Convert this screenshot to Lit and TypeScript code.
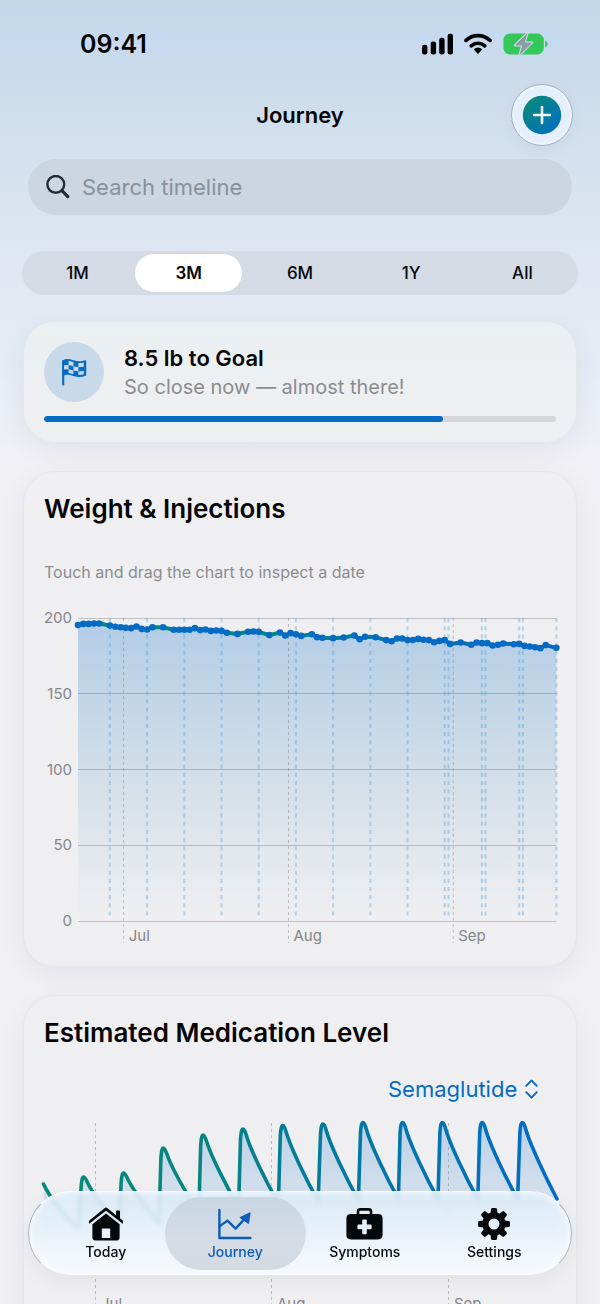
import { LitElement, html, svg, css } from "lit";
import { customElement, state } from "lit/decorators.js";

/* ---------- Weight chart data: [day, pounds] ---------- */
const WEIGHTS: [number, number][] = [
  [0, 195.3], [1, 196.1], [2, 196.1], [3, 196.4], [4, 196.4], [6, 195], [7, 194.2], [8, 193.9], [9, 193.5],
  [10, 193.3], [11, 194.4], [12, 192.8], [13, 192.4], [14, 193.9], [16, 193.9], [18, 192.2], [19, 192.2],
  [20, 192.2], [21, 192.2], [22, 193.3], [23, 192], [24, 192.4], [25, 191.5], [26, 191.7], [27, 191.5],
  [28, 190.2], [30, 189.5], [32, 190.9], [33, 191.1], [34, 190.9], [36, 188.7], [38, 190.4], [39, 188.4],
  [40, 190], [41, 189.3], [42, 188.2], [44, 189.3], [45, 187.3], [46, 186.9], [48, 186.7], [50, 187.1],
  [52, 188.4], [53, 186], [54, 187.6], [56, 187.3], [58, 185.4], [59, 184.7], [60, 186.5], [61, 186.5],
  [62, 185.4], [63, 185.4], [64, 186.2], [65, 185.6], [66, 185.4], [67, 184], [68, 184.9], [69, 185.4],
  [70, 182.9], [72, 183.8], [74, 182.3], [75, 183.8], [76, 183.4], [77, 183.4], [78, 181.8], [79, 182.3],
  [80, 183.2], [82, 182.7], [83, 182.9], [84, 181.6], [85, 181.2], [86, 180.7], [87, 180.1], [88, 182.1],
  [90, 180.3],
];
const INJECTIONS = [6, 13, 20, 27, 34, 41, 48, 55, 62, 69, 69.7, 76, 76.7, 83, 83.7, 90];
const WEIGHT_MONTHS: [string, number][] = [["Jul", 8.6], ["Aug", 39.6], ["Sep", 70.6]];

const dayX = (d: number) => 34 + d * 5.315;
const lbY = (w: number) => 313 - (w * 303) / 200;

/* ---------- Medication chart data: dose peaks and the low after each ---------- */
const PEAKS: [number, number, number][] = [
  [39.6, 62, 112], [79.6, 58, 108], [119.4, 33, 98], [159.2, 20, 92], [199, 14, 88], [238.8, 10.5, 86],
  [279, 9, 85], [319, 7.5, 84], [358.6, 7.5, 84], [398.4, 7.5, 84], [438.2, 7.5, 84], [478.4, 7.5, 84],
];
const LEVEL_MONTHS: [string, number][] = [["Jul", 51], ["Aug", 227], ["Sep", 404]];

const levelPath = () => {
  let d = "M-0.5 69C5 81 20 101 34.8 114";
  PEAKS.forEach(([x, y, low], i) => {
    const a = low - y;
    const end = i === PEAKS.length - 1 ? 34.6 : 35.4;
    d += `L${x - 2.5} ${y + 10}C${x - 2} ${y + 4} ${x - 1.4} ${y} ${x} ${y}`;
    d += `C${x + 1.8} ${y} ${x + 3} ${y + a * 0.08} ${x + 5} ${y + a * 0.155}`;
    d += `C${x + 9} ${y + a * 0.31} ${x + 22} ${y + a * 0.69} ${x + end} ${low}`;
  });
  return d;
};

/* ---------- Icons ---------- */
const gear = svg`
  <g fill="#06090c">
    ${[0, 45, 90, 135, 180, 225, 270, 315].map(
      (a) => svg`<path d="M13.4 7L14 2.2Q14.2 1 15.4 1H18.6Q19.8 1 20 2.2L20.6 7Z" transform="rotate(${a} 17 17)"/>`
    )}
  </g>
  <circle cx="17" cy="17" r="8.6" fill="none" stroke="#06090c" stroke-width="6.2"/>`;

const house = svg`
  <path d="M-1.2 16.2L17 1.8L35.2 16.2" transform="translate(1.2 .2) scale(.93)" fill="none" stroke="#06090c" stroke-width="2.8" stroke-linecap="round" stroke-linejoin="round"/>
  <path d="M27 4.4Q27 3.6 27.8 3.6H30.2Q31 3.6 31 4.4V12.2L27 9Z" fill="#06090c"/>
  <path fill-rule="evenodd" d="M17 6.4L30.6 17.2V30.6Q30.6 33.4 27.8 33.4H6.2Q3.4 33.4 3.4 30.6V17.2ZM13.4 21.4Q12.8 21.4 12.8 22V31H21.2V22Q21.2 21.4 20.6 21.4Z" fill="#06090c"/>`;

const trend = svg`
  <g fill="none" stroke="#0c5db5" stroke-width="2.4" stroke-linecap="round" stroke-linejoin="round">
    <path d="M1.4 3V31H32.4"/>
    <path d="M1.6 19.4L9.4 13.6L17.6 21.6L27 11.4"/>
  </g>
  <path d="M32.6 6.2L31 16.4Q30.8 17.2 30.1 16.7L21.9 11Q21.2 10.4 22.1 10.1L31.6 5.4Q32.6 5.2 32.6 6.2Z" fill="#0c5db5"/>`;

const kit = svg`
  <path d="M12 8V4.6Q12 2.4 14.2 2.4H22.8Q25 2.4 25 4.6V8" fill="none" stroke="#06090c" stroke-width="2.6"/>
  <path fill-rule="evenodd" d="M5 7H32Q36.6 7 36.6 11.4V28Q36.6 32.4 32 32.4H5Q.4 32.4 .4 28V11.4Q.4 7 5 7ZM16.2 13.4V17.4H12.4Q11.4 17.4 11.4 18.4V21.2Q11.4 22.2 12.4 22.2H16.2V26.2Q16.2 27.2 17.2 27.2H19.8Q20.8 27.2 20.8 26.2V22.2H24.6Q25.6 22.2 25.6 21.2V18.4Q25.6 17.4 24.6 17.4H20.8V13.4Q20.8 12.4 19.8 12.4H17.2Q16.2 12.4 16.2 13.4Z" fill="#06090c"/>`;

const TABS = [
  { label: "Today", icon: house, box: "0 0 34 34" },
  { label: "Journey", icon: trend, box: "0 0 34 34" },
  { label: "Symptoms", icon: kit, box: "0 0 37 34" },
  { label: "Settings", icon: gear, box: "0 0 34 34" },
];

/* ---------- Weight & injections chart ---------- */
@customElement("weight-chart")
export class WeightChart extends LitElement {
  static styles = css`
    :host { display: block; }
    .plot { display: block; width: 100%; height: auto; overflow: visible; }
    .label { font: 400 15px Inter, sans-serif; fill: #85858a; }
    .end { text-anchor: end; }
    .grid { stroke: #3c3c43; stroke-opacity: 0.26; stroke-width: 1; }
    .month { stroke: #3c3c43; stroke-opacity: 0.28; stroke-width: 1; stroke-dasharray: 3 3; }
    .shot { stroke: #4ba0dc; stroke-opacity: 0.38; stroke-width: 2; stroke-dasharray: 4.1 4.05; }
    .line { fill: none; stroke: url(#trend); stroke-width: 4; stroke-linejoin: round; }
    .dot { fill: #046bc4; }
  `;
  render() {
    const line = WEIGHTS.map(([d, w]) => `${dayX(d)} ${lbY(w)}`).join("L");
    return html`<svg class="plot" viewBox="0 0 512 338" role="img" aria-label="Weight and injections">
      <defs>
        <linearGradient id="trend" x1="0" x2="1" y1="0" y2="0">
          <stop offset="0" stop-color="#00897b" /><stop offset=".4" stop-color="#00897f" />
          <stop offset="1" stop-color="#0466c8" />
        </linearGradient>
        <linearGradient id="area" x1="0" x2="0" y1="0" y2="1">
          <stop offset="0" stop-color="#0068c9" stop-opacity=".25" />
          <stop offset=".3" stop-color="#1271bd" stop-opacity=".19" />
          <stop offset="1" stop-color="#2a78a8" stop-opacity="0" />
        </linearGradient>
      </defs>
      <path d="M34 313L${line}V313Z" fill="url(#area)" />
      ${[200, 150, 100, 50, 0].map(
        (v) => svg`<line class="grid" x1="34" x2="512.5" y1=${Math.floor(lbY(v)) + 0.5} y2=${Math.floor(lbY(v)) + 0.5}></line>
          <text class="label end" x="28" y=${lbY(v) + 5}>${v}</text>`
      )}
      ${WEIGHT_MONTHS.map(
        ([m, d]) => svg`<line class="month" x1=${dayX(d)} x2=${dayX(d)} y1="10" y2="335"></line>
          <text class="label" x=${dayX(d) + 5} y="333">${m}</text>`
      )}
      ${INJECTIONS.map((d) => svg`<line class="shot" x1=${dayX(d)} x2=${dayX(d)} y1="10" y2="311"></line>`)}
      <path class="line" d="M${line}" />
      ${WEIGHTS.map(([d, w]) => svg`<circle class="dot" cx=${dayX(d)} cy=${lbY(w)} r="3.3"></circle>`)}
    </svg>`;
  }
}

/* ---------- Medication level chart ---------- */
@customElement("level-chart")
export class LevelChart extends LitElement {
  static styles = css`
    :host { display: block; }
    .plot { display: block; width: 100%; height: auto; overflow: visible; }
    .label { font: 400 15px Inter, sans-serif; fill: #85858a; }
    .month { stroke: #3c3c43; stroke-opacity: 0.28; stroke-width: 1; stroke-dasharray: 3 3; }
    .line { fill: none; stroke: url(#level); stroke-width: 3.6; stroke-linecap: round; stroke-linejoin: round; }
  `;
  render() {
    const d = levelPath();
    return html`<svg class="plot" viewBox="0 0 512 210" role="img" aria-label="Estimated medication level">
      <defs>
        <linearGradient id="level" gradientUnits="userSpaceOnUse" x1="0" x2="512" y1="0" y2="0">
          <stop offset="0" stop-color="#048a79" /><stop offset=".3" stop-color="#07857f" />
          <stop offset=".6" stop-color="#0278a4" /><stop offset="1" stop-color="#036bc8" />
        </linearGradient>
        <linearGradient id="fill" gradientUnits="userSpaceOnUse" x1="0" x2="0" y1="8" y2="155">
          <stop offset="0" stop-color="#0068c9" stop-opacity=".22" />
          <stop offset="1" stop-color="#0068c9" stop-opacity="0" />
        </linearGradient>
      </defs>
      ${LEVEL_MONTHS.map(
        ([m, x]) => svg`<line class="month" x1=${x + 0.5} x2=${x + 0.5} y1="8" y2="205"></line>
          <text class="label" x=${x + 6} y="194">${m}</text>`
      )}
      <path d="${d}V155H0Z" fill="url(#fill)" />
      <path class="line" d=${d} />
    </svg>`;
  }
}

/* ---------- Screen ---------- */
@customElement("app-root")
export class AppRoot extends LitElement {
  @state() range = "3M";
  @state() tab = "Journey";

  static styles = css`
    :host {
      display: block;
      position: relative;
      height: 100vh;
      overflow: hidden;
      font-family: Inter, "Liberation Sans", sans-serif;
      color: #050505;
      background: #f0f0f5;
    }
    * { box-sizing: border-box; }
    h1, h2, p { margin: 0; }
    .scroll { height: 100%; overflow-y: auto; scrollbar-width: none; }
    .page {
      display: flex;
      flex-direction: column;
      padding-bottom: 120px;
      background: linear-gradient(180deg, #c5d8e8 0, #c5d9ef 34px, #cbdbeb 70px, #d3e1ee 150px, #dbe4f0 220px, #e4eaf4 310px, #e6ecf6 370px, #f0f0f6 450px, #f0f0f5 500px);
    }
    .status {
      display: flex;
      align-items: center;
      justify-content: space-between;
      height: 84px;
      padding: 4px 52px 0 80px;
    }
    .time { font-size: 25px; line-height: 30px; font-weight: 600; }
    .signals { display: flex; align-items: center; gap: 10px; }
    .header {
      display: grid;
      grid-template-columns: 62px 1fr 62px;
      align-items: center;
      padding: 0 27px;
      text-align: center;
    }
    .title { grid-column: 2; font-size: 22px; line-height: 28px; font-weight: 600; }
    .add {
      display: grid;
      place-items: center;
      width: 62px;
      height: 62px;
      padding: 0;
      border: 1px solid #a3b1c2;
      border-radius: 50%;
      background: #e4effb;
      box-shadow: inset 0 0 3px 1px #f4faff, 0 4px 14px rgba(40, 80, 120, 0.05);
    }
    .search {
      display: flex;
      align-items: center;
      gap: 12px;
      height: 56px;
      margin: 13px 28px 0;
      padding: 0 18px;
      border-radius: 28px;
      background: #cbd6e1;
    }
    .query {
      flex: 1;
      min-width: 0;
      padding: 0;
      border: 0;
      outline: 0;
      background: none;
      color: #1f2a35;
      font: 400 22px/30px Inter, sans-serif;
    }
    .query::placeholder { color: #87919c; opacity: 1; }
    .ranges {
      display: grid;
      grid-template-columns: repeat(5, 1fr);
      margin: 36px 22px 0;
      padding: 3px 0;
      border: 0;
      border-radius: 22px;
      background: #d4dbe5;
      min-width: 0;
    }
    .range { display: grid; padding: 0 2px; cursor: pointer; }
    .radio { position: absolute; opacity: 0; width: 1px; height: 1px; margin: 0; }
    .pill {
      border-radius: 19px;
      font-size: 17px;
      line-height: 38px;
      font-weight: 500;
      text-align: center;
    }
    .radio:checked + .pill { background: #fff; font-weight: 600; }
    .cards { display: flex; flex-direction: column; gap: 28px; padding: 26px 23px 0; }
    .card {
      padding: 20px;
      border: 1px solid rgba(60, 60, 70, 0.045);
      border-radius: 32px;
      background: #efeff1;
      box-shadow: 0 8px 28px rgba(20, 20, 40, 0.06);
    }
    .goal { background: linear-gradient(180deg, #eceff3, #eeeff0); }
    .goal-row { display: flex; align-items: center; gap: 20px; margin-bottom: 14px; }
    .badge {
      display: grid;
      place-items: center;
      width: 60px;
      height: 60px;
      border-radius: 50%;
      background: #c8daea;
    }
    .goal-title { padding-top: 2px; font-size: 22px; line-height: 28px; font-weight: 600; }
    .goal-note { font-size: 20px; line-height: 30px; color: #8b8c90; }
    .bar {
      display: block;
      width: 100%;
      height: 6px;
      appearance: none;
      border: 0;
      border-radius: 3px;
      overflow: hidden;
    }
    .bar::-webkit-progress-bar { background: #d5d7da; }
    .bar::-webkit-progress-value { background: #056ac3; border-radius: 3px; }
    .heading { font-size: 26px; line-height: 34px; font-weight: 600; }
    .hint { margin: 36px 0 26px; font-size: 16px; line-height: 20px; color: #8b8c90; }
    .picker {
      display: flex;
      align-items: center;
      justify-content: flex-end;
      gap: 7px;
      margin: 25px 0 12px;
      padding-right: 18px;
    }
    .drug {
      appearance: none;
      padding: 0;
      border: 0;
      outline: 0;
      background: none;
      color: #056ac3;
      font: 400 22px/28px Inter, sans-serif;
    }
    .tabs {
      position: absolute;
      left: 28px;
      right: 28px;
      bottom: 28px;
      display: grid;
      grid-template-columns: repeat(4, 1fr);
      padding: 5px 12px;
      border: 1px solid rgba(130, 140, 150, 0.6);
      border-top-color: rgba(250, 253, 255, 0.9);
      border-bottom-color: rgba(225, 229, 234, 0.9);
      border-radius: 43px;
      background: linear-gradient(180deg, rgba(219, 234, 246, 0.9) 0, rgba(229, 240, 250, 0.91) 40%, rgba(242, 246, 251, 0.96) 75%, rgba(245, 248, 250, 0.97) 100%);
      backdrop-filter: blur(2px);
      box-shadow: inset 0 0 6px 1px rgba(255, 255, 255, 0.7), 0 6px 20px rgba(0, 0, 0, 0.05);
    }
    .tab {
      display: flex;
      flex-direction: column;
      align-items: center;
      gap: 2px;
      height: 73px;
      margin: 0 -6px;
      padding: 10px 0 0;
      border: 0;
      border-radius: 37px;
      background: none;
      color: #06090c;
      font: 500 14px/18px Inter, sans-serif;
    }
    .active { background: linear-gradient(180deg, #c8d7e3, #d5dce5 60%, #d5dae1); color: #0c5db5; }
  `;

  render() {
    return html`
      <div class="scroll">
        <div class="page">
          <div class="status">
            <span class="time">09:41</span>
            <span class="signals">
              <svg width="32" height="22" viewBox="0 0 32 22" aria-hidden="true">
                <rect x="0" y="11.8" width="5.4" height="9.6" rx="2.2" />
                <rect x="8.7" y="8.6" width="5.4" height="12.8" rx="2.2" />
                <rect x="17.2" y="4.8" width="5.4" height="16.6" rx="2.2" />
                <rect x="25.6" y=".8" width="5.4" height="20.6" rx="2.2" />
              </svg>
              <svg width="28" height="22" viewBox="0 0 28 22" aria-hidden="true">
                <g fill="none" stroke="#000" stroke-width="3.6" stroke-linecap="round">
                  <path d="M2 7.4A17.4 17.4 0 0 1 26 7.4" />
                  <path d="M7.2 12.8A10.4 10.4 0 0 1 20.8 12.8" />
                </g>
                <path d="M14 14.4Q16.4 14.4 17.8 16Q18.2 16.6 17.7 17.1L14.6 20.4Q14 21 13.4 20.4L10.3 17.1Q9.8 16.6 10.2 16Q11.6 14.4 14 14.4Z" />
              </svg>
              <svg width="46" height="24" viewBox="0 0 46 24" aria-hidden="true">
                <rect x="1.4" y="1.6" width="40.4" height="20.8" rx="6.4" fill="#34c759" />
                <path d="M43.2 8.4Q45.8 9.6 45.8 12T43.2 15.6Z" fill="#34c759" />
                <path d="M25.6 .8L12.8 13.4H20.2L17.2 23.4L30.4 10.4H22.8Z" fill="#8d9aa8" stroke="#cfe3e6" stroke-width="2" stroke-linejoin="round" paint-order="stroke" />
              </svg>
            </span>
          </div>

          <header class="header">
            <h1 class="title">Journey</h1>
            <button class="add" aria-label="Add">
              <svg width="40" height="40" viewBox="0 0 40 40">
                <defs>
                  <linearGradient id="plus" x1="0" y1="0" x2="1" y2="1">
                    <stop offset=".2" stop-color="#068684" /><stop offset=".9" stop-color="#036fbf" />
                  </linearGradient>
                </defs>
                <circle cx="20" cy="20" r="19.2" fill="url(#plus)" />
                <path d="M20 12V28M12 20H28" stroke="#f2f8fc" stroke-width="2.6" stroke-linecap="round" />
              </svg>
            </button>
          </header>

          <div class="search">
            <svg width="24" height="24" viewBox="0 0 24 24" aria-hidden="true">
              <circle cx="9.8" cy="9.4" r="8.4" fill="none" stroke="#222b35" stroke-width="2.4" />
              <path d="M16 15.6L21.8 21.6" stroke="#222b35" stroke-width="3.2" stroke-linecap="round" />
            </svg>
            <input class="query" type="search" placeholder="Search timeline" aria-label="Search timeline" />
          </div>

          <fieldset class="ranges" aria-label="Range">
            ${["1M", "3M", "6M", "1Y", "All"].map(
              (r) => html`<label class="range">
                <input class="radio" type="radio" name="range" .checked=${this.range === r} @change=${() => (this.range = r)} />
                <span class="pill">${r}</span>
              </label>`
            )}
          </fieldset>

          <main class="cards">
            <section class="card goal">
              <div class="goal-row">
                <div class="badge">
                  <svg width="26" height="28" viewBox="0 0 26 28" aria-hidden="true">
                    <path d="M2.2 26.4V3" stroke="#086cc2" stroke-width="2.2" stroke-linecap="round" />
                    <path d="M2.2 3C5 1.4 8.4 1.6 12 2.9S20.6 4.4 24.4 3V17C20.6 18.6 16.4 18.4 12.8 17.2S5 15.4 2.2 16.8Z" fill="#086cc2" stroke="#086cc2" stroke-width="1.6" stroke-linejoin="round" />
                    <g fill="#c8daea">
                      <path d="M7.6 2.8L12.4 3.9V8.2L7.6 7.1Z" />
                      <path d="M17.4 5L22.8 4.7V8.8L17.4 9.2Z" />
                      <path d="M3 7.3L7.6 7.1V11.3L3 11.5Z" />
                      <path d="M12.4 8.2L17.4 9.2V13.4L12.4 12.4Z" />
                      <path d="M7.6 11.3L12.4 12.4V16.2L7.6 15.1Z" />
                      <path d="M17.4 13.4L22.8 12.9V16.4L17.4 17Z" />
                    </g>
                  </svg>
                </div>
                <div>
                  <h2 class="goal-title">8.5 lb to Goal</h2>
                  <p class="goal-note">So close now — almost there!</p>
                </div>
              </div>
              <progress class="bar" value="78" max="100" aria-label="Progress to goal"></progress>
            </section>

            <section class="card">
              <h2 class="heading">Weight &amp; Injections</h2>
              <p class="hint">Touch and drag the chart to inspect a date</p>
              <weight-chart></weight-chart>
            </section>

            <section class="card">
              <h2 class="heading">Estimated Medication Level</h2>
              <label class="picker">
                <select class="drug" aria-label="Medication">
                  <option>Semaglutide</option>
                </select>
                <svg width="13" height="20" viewBox="0 0 13 20" aria-hidden="true">
                  <path d="M1.2 6.8L6.5 1.4L11.8 6.8M1.2 13.2L6.5 18.6L11.8 13.2" fill="none" stroke="#056ac3" stroke-width="1.9" stroke-linecap="round" stroke-linejoin="round" />
                </svg>
              </label>
              <level-chart></level-chart>
            </section>
          </main>
        </div>
      </div>

      <nav class="tabs">
        ${TABS.map(
          (t) => html`<button class="tab ${this.tab === t.label ? "active" : ""}" @click=${() => (this.tab = t.label)}>
            <svg height="34" viewBox=${t.box} aria-hidden="true">${t.icon}</svg>
            <span>${t.label}</span>
          </button>`
        )}
      </nav>
    `;
  }
}
